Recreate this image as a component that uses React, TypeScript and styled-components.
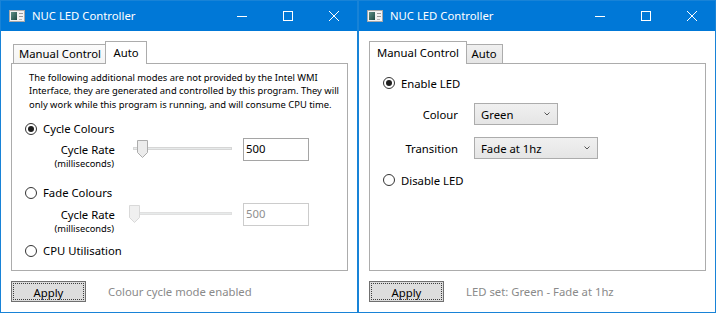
import React from "react";
import styled, { createGlobalStyle } from "styled-components";

const GlobalStyle = createGlobalStyle`
  body {
    margin: 0;
    background: #ffffff;
    font-family: "Noto Sans", "Open Sans", sans-serif;
    font-size: 11.3px;
    color: #000000;
  }
`;

const Desktop = styled.div`
  display: flex;
  width: 716px;
  height: 313px;
`;

const Window = styled.div`
  box-sizing: border-box;
  width: 358px;
  height: 313px;
  border: 1px solid #1883d7;
  display: flex;
  flex-direction: column;
  background: #ffffff;
`;

const TitleBar = styled.div`
  height: 30px;
  background: #0078d7;
  color: #ffffff;
  display: flex;
  align-items: center;
  flex-shrink: 0;
`;

const AppIcon = styled.svg`
  margin-left: 8px;
  flex-shrink: 0;
`;

const Title = styled.div`
  margin-left: 7px;
  flex: 1;
  line-height: 16px;
`;

const CaptionButton = styled.div`
  width: 46px;
  height: 30px;
  display: flex;
  align-items: center;
  justify-content: center;
`;

const Body = styled.div`
  flex: 1;
  display: flex;
  flex-direction: column;
  padding: 10px 9px 10px 10px;
`;

const TabStrip = styled.div`
  height: 22px;
  display: flex;
  align-items: flex-end;
  padding-left: 2px;
`;

const Tab = styled.div<{ $active?: boolean; $w: number; $bg?: string }>`
  box-sizing: border-box;
  width: ${(p) => (p.$active ? p.$w + 4 : p.$w)}px;
  margin: ${(p) => (p.$active ? "0 -2px -1px -2px" : "0")};
  padding-top: ${(p) => (p.$active ? 2 : 0)}px;
  height: ${(p) => (p.$active ? 23 : 19)}px;
  line-height: 18px;
  border: 1px solid #acacac;
  border-bottom: none;
  background: ${(p) => (p.$active ? "#ffffff" : p.$bg || "linear-gradient(#f0f0f0, #e5e5e5)")};
  text-align: center;
  white-space: nowrap;
  position: relative;
  z-index: ${(p) => (p.$active ? 2 : 1)};
`;

const Panel = styled.div<{ $pt: number }>`
  box-sizing: border-box;
  height: 208px;
  border: 1px solid #acacac;
  padding: ${(p) => p.$pt}px 0 0 13px;
  display: flex;
  flex-direction: column;
`;

const Notice = styled.div`
  margin-left: 4px;
  padding-top: 1px;
  font-size: 9.4px;
  line-height: 13.3px;
  white-space: nowrap;
`;

const RadioRow = styled.div<{ $mt: number }>`
  margin-top: ${(p) => p.$mt}px;
  height: 16px;
  display: flex;
  align-items: center;
  gap: 6px;
`;

const RadioCircle = styled.span<{ $checked?: boolean }>`
  box-sizing: border-box;
  width: 12px;
  height: 12px;
  border-radius: 50%;
  border: 1px solid #333333;
  background: #ffffff;
  display: flex;
  align-items: center;
  justify-content: center;
  &::after {
    content: "";
    width: 6px;
    height: 6px;
    border-radius: 50%;
    background: #1e1e1e;
    display: ${(p) => (p.$checked ? "block" : "none")};
  }
`;

const RateBlock = styled.div<{ $mt: number }>`
  margin-top: ${(p) => p.$mt}px;
  display: flex;
  align-items: flex-start;
`;

const RateLabel = styled.div`
  width: 90px;
  padding-top: 4px;
  text-align: right;
  line-height: 15px;
`;

const Units = styled.div`
  font-size: 9.3px;
  line-height: 13px;
  margin-right: 1px;
`;

const Slider = styled.div`
  position: relative;
  margin-left: 18px;
  width: 99px;
  height: 23px;
`;

const Track = styled.div<{ $disabled?: boolean }>`
  position: absolute;
  left: 0;
  right: 0;
  top: 9px;
  height: 3px;
  box-sizing: border-box;
  background: #e7eaea;
  border: 1px solid ${(p) => (p.$disabled ? "#e0e0e0" : "#d6d6d6")};
`;

const Thumb = styled.svg<{ $x: number }>`
  position: absolute;
  top: 2px;
  left: ${(p) => p.$x}px;
`;

const TextBox = styled.div<{ $disabled?: boolean }>`
  box-sizing: border-box;
  margin-left: 11px;
  width: 66px;
  height: 23px;
  border: 1px solid ${(p) => (p.$disabled ? "#cccccc" : "#a5a5a5")};
  padding-left: 2px;
  line-height: 20px;
  color: ${(p) => (p.$disabled ? "#8f8f8f" : "#000000")};
`;

const FormRow = styled.div<{ $mt: number }>`
  margin-top: ${(p) => p.$mt}px;
  display: flex;
  align-items: center;
`;

const FieldLabel = styled.div`
  width: 75px;
  text-align: right;
  margin-right: 16px;
`;

const Combo = styled.div<{ $w: number }>`
  box-sizing: border-box;
  width: ${(p) => p.$w}px;
  height: 22px;
  border: 1px solid #acacac;
  background: linear-gradient(#f0f0f0, #e5e5e5);
  padding: 0 7px 0 6px;
  display: flex;
  align-items: center;
  justify-content: space-between;
`;

const Footer = styled.div`
  margin-top: 10px;
  height: 21px;
  display: flex;
  align-items: center;
`;

const Button = styled.div`
  box-sizing: border-box;
  position: relative;
  width: 75px;
  height: 21px;
  border: 1px solid #707070;
  background: #dddddd;
  text-align: center;
  line-height: 21px;
  &::after {
    content: "";
    position: absolute;
    inset: 1px;
    border: 1px dotted #3c3c3c;
  }
`;

const Status = styled.div`
  margin-left: 22px;
  color: #8a8a8a;
`;

const WindowIcon = () => (
  <AppIcon width="16" height="12" viewBox="0 0 16 12">
    <defs>
      <linearGradient id="ig" x1="0" y1="0" x2="1" y2="1">
        <stop offset="0" stopColor="#5f8f86" />
        <stop offset="1" stopColor="#1d4a45" />
      </linearGradient>
    </defs>
    <rect x="0.5" y="0.5" width="15" height="11" fill="#f2f2f2" stroke="#a8a8a8" />
    <rect x="2" y="2" width="6" height="8" fill="url(#ig)" />
    <rect x="10" y="3" width="4" height="1" fill="#9a9a9a" />
    <rect x="10" y="6" width="4" height="1" fill="#9a9a9a" />
    <rect x="10" y="9" width="3" height="1" fill="#b8b8b8" />
  </AppIcon>
);

const Captions = () => (
  <>
    <CaptionButton>
      <svg width="10" height="10" viewBox="0 0 10 10">
        <path d="M0 5.5h10" stroke="#fff" strokeWidth="1" />
      </svg>
    </CaptionButton>
    <CaptionButton>
      <svg width="10" height="10" viewBox="0 0 10 10">
        <rect x="0.5" y="0.5" width="9" height="9" fill="none" stroke="#fff" />
      </svg>
    </CaptionButton>
    <CaptionButton>
      <svg width="10" height="10" viewBox="0 0 10 10">
        <path d="M0 0L10 10M10 0L0 10" stroke="#fff" strokeWidth="1" />
      </svg>
    </CaptionButton>
  </>
);

const TitleRow = () => (
  <TitleBar>
    <WindowIcon />
    <Title>NUC LED Controller</Title>
    <Captions />
  </TitleBar>
);

const ThumbShape = ({ x, disabled }: { x: number; disabled?: boolean }) => (
  <Thumb $x={x} width="11" height="18" viewBox="0 0 11 18">
    <path
      d="M0.5 0.5H10.5V12.5L5.5 17.5L0.5 12.5Z"
      fill={disabled ? "#f0f0f0" : "#ececec"}
      stroke={disabled ? "#d9d9d9" : "#acacac"}
    />
  </Thumb>
);

const Rate = ({ mt, thumb, disabled }: { mt: number; thumb: number; disabled?: boolean }) => (
  <RateBlock $mt={mt}>
    <RateLabel>
      Cycle Rate
      <Units>(milliseconds)</Units>
    </RateLabel>
    <Slider>
      <Track $disabled={disabled} />
      <ThumbShape x={thumb} disabled={disabled} />
    </Slider>
    <TextBox $disabled={disabled}>500</TextBox>
  </RateBlock>
);

const Chevron = () => (
  <svg width="6" height="4" viewBox="0 0 6 4">
    <path d="M0.5 0.5L3 3L5.5 0.5" fill="none" stroke="#555" strokeWidth="1" />
  </svg>
);

export default function App() {
  return (
    <>
      <GlobalStyle />
      <Desktop>
        <Window>
          <TitleRow />
          <Body>
            <TabStrip>
              <Tab $w={94} $bg="linear-gradient(#fbfbfb, #f4f4f4)">Manual Control</Tab>
              <Tab $w={38} $active>
                Auto
              </Tab>
            </TabStrip>
            <Panel $pt={6}>
              <Notice>
                The following additional modes are not provided by the Intel WMI
                <br />
                Interface, they are generated and controlled by this program. They will
                <br />
                only work while this program is running, and will consume CPU time.
              </Notice>
              <RadioRow $mt={10}>
                <RadioCircle $checked />
                Cycle Colours
              </RadioRow>
              <Rate mt={1} thumb={4} />
              <RadioRow $mt={15}>
                <RadioCircle />
                Fade Colours
              </RadioRow>
              <Rate mt={2} thumb={-4} disabled />
              <RadioRow $mt={8}>
                <RadioCircle />
                CPU Utilisation
              </RadioRow>
            </Panel>
            <Footer>
              <Button>Apply</Button>
              <Status>Colour cycle mode enabled</Status>
            </Footer>
          </Body>
        </Window>
        <Window>
          <TitleRow />
          <Body>
            <TabStrip>
              <Tab $w={94} $active>
                Manual Control
              </Tab>
              <Tab $w={38}>Auto</Tab>
            </TabStrip>
            <Panel $pt={11}>
              <RadioRow $mt={0}>
                <RadioCircle $checked />
                Enable LED
              </RadioRow>
              <FormRow $mt={12}>
                <FieldLabel>Colour</FieldLabel>
                <Combo $w={84}>
                  Green
                  <Chevron />
                </Combo>
              </FormRow>
              <FormRow $mt={12}>
                <FieldLabel>Transition</FieldLabel>
                <Combo $w={124}>
                  Fade at 1hz
                  <Chevron />
                </Combo>
              </FormRow>
              <RadioRow $mt={13}>
                <RadioCircle />
                Disable LED
              </RadioRow>
            </Panel>
            <Footer>
              <Button>Apply</Button>
              <Status>LED set: Green - Fade at 1hz</Status>
            </Footer>
          </Body>
        </Window>
      </Desktop>
    </>
  );
}
